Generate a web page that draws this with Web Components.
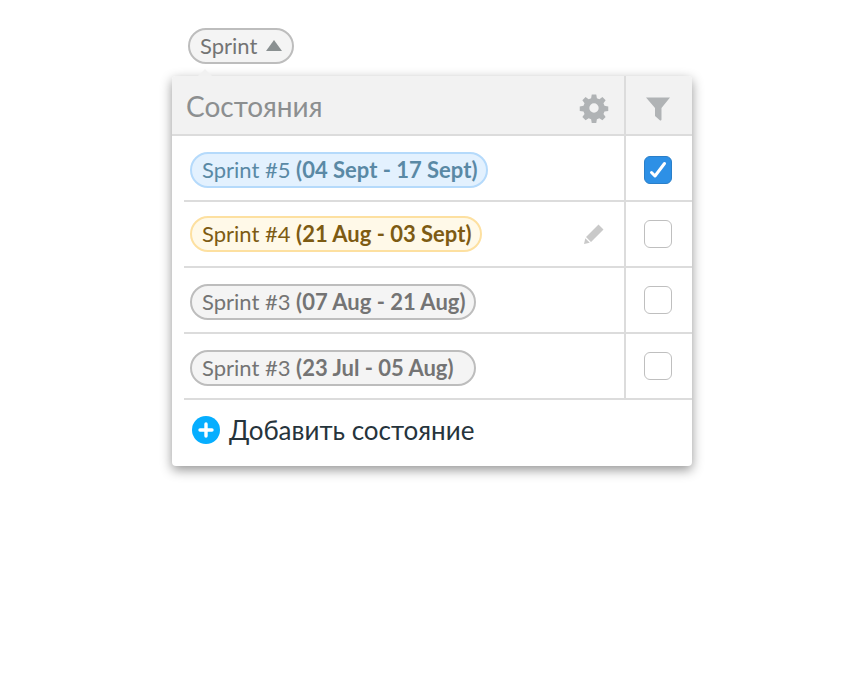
<!DOCTYPE html>
<html>
<head>
<meta charset="utf-8">
<title>Sprint</title>
<style>
  html, body { margin: 0; height: 100%; background: #fff; }
  body { font-family: Lato, "Open Sans", sans-serif; }
</style>
</head>
<body>
<state-dropdown label="Sprint" title-text="Состояния" add-text="Добавить состояние">
  <state-row color="blue" name="Sprint #5" dates="(04 Sept - 17 Sept)" shift="2" check-shift="2" checked></state-row>
  <state-row color="yellow" name="Sprint #4" dates="(21 Aug - 03 Sept)" editable></state-row>
  <state-row color="gray" name="Sprint #3" dates="(07 Aug - 21 Aug)" shift="2"></state-row>
  <state-row color="gray" name="Sprint #3" dates="(23 Jul - 05 Aug)" shift="2" wide></state-row>
</state-dropdown>

<script>
class StatePill extends HTMLElement {
    constructor() {
        super();
        this.attachShadow({mode: "open"});
    }

    connectedCallback() {
        this.render();
    }

    render() {
        this.shadowRoot.innerHTML = `
        <style>
        :host {
            display: inline-flex;
            align-items: center;
            box-sizing: border-box;
            height: 36px;
            padding: 0 9px 2px 10px;
            border: 2px solid #bdbdbd;
            border-radius: 18px;
            background: #f4f4f4;
            color: #747474;
            font-size: 22px;
            white-space: nowrap;
        }
        :host([color="blue"]) { background: #e3f1fe; border-color: #b5dafb; color: #5a89a5; }
        :host([color="yellow"]) { background: #fff9e8; border-color: #fde0a0; color: #7d5b13; }
        </style>
        <slot></slot>
        `;
    }
}

class StateCheckbox extends HTMLElement {
    constructor() {
        super();
        this.attachShadow({mode: "open"});
    }

    connectedCallback() {
        this.render();
    }

    render() {
        const tick = this.hasAttribute("checked")
            ? `<svg width="28" height="28" viewBox="0 0 28 28"><path d="M7.5 16.5l3.5 3.5L20.5 7.5" fill="none" stroke="#fff" stroke-width="3" stroke-linecap="round" stroke-linejoin="round"/></svg>`
            : "";
        this.shadowRoot.innerHTML = `
        <style>
        :host {
            display: block;
            box-sizing: border-box;
            width: 28px;
            height: 28px;
            border-radius: 6px;
            border: 1px solid #bfbfbf;
            background: #fff;
        }
        :host([checked]) { background: #2d90e6; border-color: #2a7fc9; }
        svg { display: block; margin: -1px; }
        </style>
        ${tick}
        `;
    }
}

class StateRow extends HTMLElement {
    constructor() {
        super();
        this.attachShadow({mode: "open"});
    }

    connectedCallback() {
        this.render();
    }

    render() {
        const color = this.getAttribute("color");
        const shift = this.getAttribute("shift") || 0;
        const checkShift = this.getAttribute("check-shift") || 0;
        const pencil = this.hasAttribute("editable")
            ? `<svg class="pencil" width="22" height="22" viewBox="0 0 22 22"><path d="M15.5 1.5l5 5L8 19l-5-5zM2.3 15.2l4.5 4.5L1 21z" fill="#c9c9c9"/></svg>`
            : "";
        this.shadowRoot.innerHTML = `
        <style>
        :host {
            display: flex;
            height: 66px;
            margin-left: 12px;
            border-bottom: 2px solid #dcdcdc;
            box-sizing: border-box;
        }
        .main {
            flex: 1;
            display: flex;
            align-items: center;
            justify-content: space-between;
            padding: ${shift * 2}px 19px 0 6px;
        }
        .check {
            width: 68px;
            box-sizing: border-box;
            border-left: 2px solid #dcdcdc;
            display: flex;
            align-items: center;
            justify-content: center;
            padding: ${checkShift * 2}px 2px 0 0;
        }
        state-pill.wide { min-width: 286px; }
        b { font-weight: 700; }
        svg { display: block; }
        </style>
        <div class="main">
            <state-pill color="${color}" class="${this.hasAttribute("wide") ? "wide" : ""}">${this.getAttribute("name")}&nbsp;<b>${this.getAttribute("dates")}</b></state-pill>
            ${pencil}
        </div>
        <div class="check"><state-checkbox ${this.hasAttribute("checked") ? "checked" : ""}></state-checkbox></div>
        `;
    }
}

class StateDropdown extends HTMLElement {
    constructor() {
        super();
        this.attachShadow({mode: "open"});
    }

    connectedCallback() {
        this.render();
    }

    render() {
        this.shadowRoot.innerHTML = `
        <style>
        :host {
            display: block;
            padding: 28px 0 0 172px;
        }
        .toggle {
            display: inline-flex;
            align-items: center;
            gap: 9px;
            box-sizing: border-box;
            height: 36px;
            margin-left: 16px;
            padding: 0 10px 2px;
            border: 2px solid #bdbdbd;
            border-radius: 18px;
            background: #f4f4f4;
            color: #747474;
            font-size: 22px;
            vertical-align: top;
        }
        .anchor { height: 36px; }
        .panel {
            position: relative;
            width: 520px;
            margin-top: 12px;
            background: #fff;
            border-radius: 4px;
            box-shadow: 0 4px 12px rgba(0, 0, 0, .42);
        }
        .tail {
            position: absolute;
            left: 28px;
            top: -5px;
            width: 10px;
            height: 10px;
            background: #f1f1f1;
            transform: rotate(45deg);
        }
        header {
            position: relative;
            display: flex;
            height: 60px;
            box-sizing: border-box;
            background: #f2f2f2;
            border-bottom: 2px solid #dcdcdc;
            border-radius: 4px 4px 0 0;
        }
        .title {
            flex: 1;
            display: flex;
            align-items: center;
            justify-content: space-between;
            padding: 2px 15px 0 14px;
            color: #8c8f90;
            font-size: 28px;
        }
        .title svg { margin-top: 4px; }
        .filter {
            width: 68px;
            box-sizing: border-box;
            border-left: 2px solid #dcdcdc;
            padding: 7px 2px 0 0;
            display: flex;
            align-items: center;
            justify-content: center;
        }
        footer {
            display: flex;
            align-items: center;
            gap: 9px;
            height: 66px;
            padding: 0 0 6px 20px;
            box-sizing: border-box;
            color: #26343c;
            font-size: 26px;
            line-height: 30px;
            border-radius: 0 0 4px 4px;
        }
        svg { display: block; }
        </style>
        <div class="anchor">
            <div class="toggle">${this.getAttribute("label")}
                <svg width="16" height="11" viewBox="0 0 16 11"><path d="M8 0l8 11H0z" fill="#8a9091"/></svg>
            </div>
        </div>
        <div class="panel">
            <div class="tail"></div>
            <header>
                <div class="title">${this.getAttribute("title-text")}
                    <svg width="30" height="30" viewBox="0 0 32 32"><path fill="#b0b3b5" fill-rule="evenodd" d="M13.6 1.5h4.8l.7 4 2.6 1.1 3.3-2.3 3.4 3.4-2.3 3.3 1.1 2.6 4 .7v4.8l-4 .7-1.1 2.6 2.3 3.3-3.4 3.4-3.3-2.3-2.6 1.1-.7 4h-4.8l-.7-4-2.6-1.1-3.3 2.3-3.4-3.4 2.3-3.3-1.1-2.6-4-.7v-4.8l4-.7 1.1-2.6-2.3-3.3 3.4-3.4 3.3 2.3 2.6-1.1zM16 11a5 5 0 1 0 0 10 5 5 0 0 0 0-10z"/></svg>
                </div>
                <div class="filter">
                    <svg width="26" height="26" viewBox="0 0 26 26"><path fill="#b0b3b5" d="M1 1.5h24L16.5 12v11.5a1 1 0 0 1-1.7.7L10 20v-8z"/></svg>
                </div>
            </header>
            <slot></slot>
            <footer>
                <svg width="28" height="28" viewBox="0 0 28 28"><circle cx="14" cy="14" r="14" fill="#06aeff"/><path d="M14 8v12M8 14h12" stroke="#fff" stroke-width="3.4" stroke-linecap="round"/></svg>
                ${this.getAttribute("add-text")}
            </footer>
        </div>
        `;
    }
}

customElements.define("state-pill", StatePill);
customElements.define("state-checkbox", StateCheckbox);
customElements.define("state-row", StateRow);
customElements.define("state-dropdown", StateDropdown);
</script>
</body>
</html>
